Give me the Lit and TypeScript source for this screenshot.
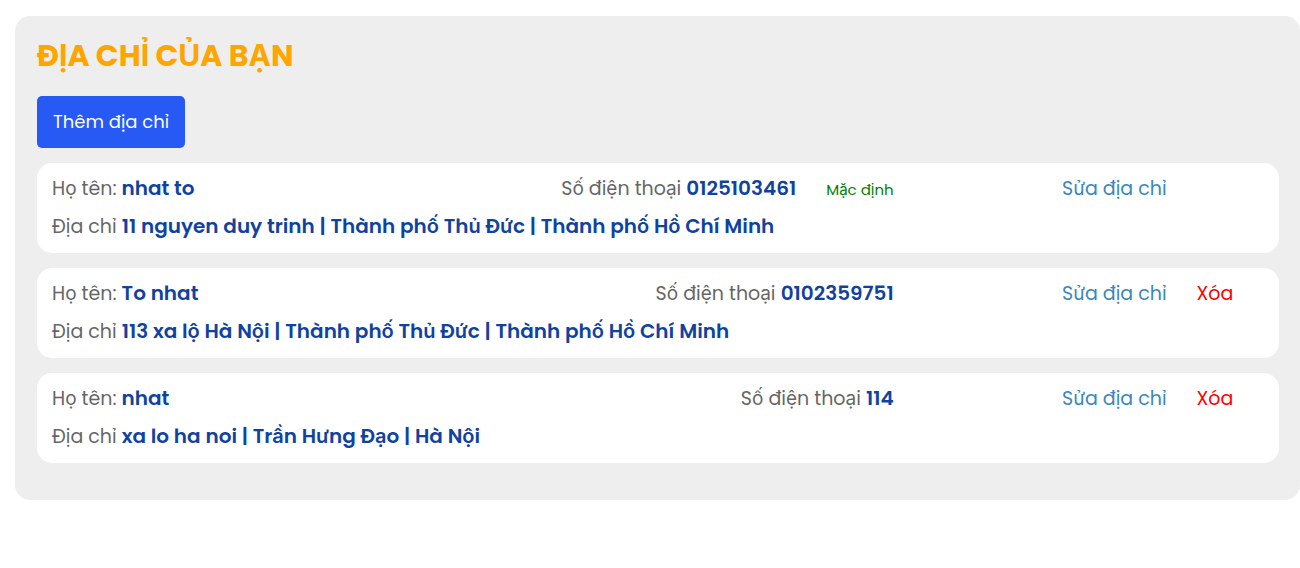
import { LitElement, html, css, nothing } from "lit";
import { customElement, property } from "lit/decorators.js";

interface Address {
  name: string;
  phone: string;
  parts: string[];
  isDefault?: boolean;
}

const ADDRESSES: Address[] = [
  {
    name: "nhat to",
    phone: "0125103461",
    parts: ["11 nguyen duy trinh", "Thành phố Thủ Đức", "Thành phố Hồ Chí Minh"],
    isDefault: true,
  },
  {
    name: "To nhat",
    phone: "0102359751",
    parts: ["113 xa lộ Hà Nội", "Thành phố Thủ Đức", "Thành phố Hồ Chí Minh"],
  },
  {
    name: "nhat",
    phone: "114",
    parts: ["xa lo ha noi", "Trần Hưng Đạo", "Hà Nội"],
  },
];

@customElement("address-card")
export class AddressCard extends LitElement {
  static styles = css`
    :host {
      display: block;
    }
    .card {
      display: grid;
      grid-template-columns: 25fr 5fr 6fr;
      row-gap: 8px;
      padding: 11px 15px;
      border-radius: 15px;
      background: #fff;
      color: #666;
      font-size: 19px;
      line-height: 30px;
    }
    .who {
      display: flex;
      justify-content: space-between;
    }
    .contact {
      display: flex;
      align-items: baseline;
      gap: 30px;
    }
    .value {
      color: #10439f;
      font-size: 20px;
      font-weight: 600;
      line-height: 20px;
    }
    .default {
      color: green;
      font-size: 15px;
      line-height: 20px;
    }
    .actions {
      grid-column: 3;
      display: flex;
      gap: 30px;
      white-space: nowrap;
    }
    .where {
      grid-column: 1 / -1;
    }
    .edit {
      color: #3887be;
      text-decoration: none;
    }
    .remove {
      padding: 0;
      border: 0;
      background: none;
      color: #f00;
      font: inherit;
      cursor: pointer;
    }
  `;

  @property({ attribute: false }) address!: Address;

  render() {
    const { name, phone, parts, isDefault } = this.address;
    return html`
      <article class="card">
        <div class="who">
          <span>Họ tên: <span class="value">${name}</span></span>
          <div class="contact">
            <span>Số điện thoại <span class="value">${phone}</span></span>
            ${isDefault ? html`<span class="default">Mặc định</span>` : nothing}
          </div>
        </div>
        <div class="actions">
          <a class="edit" href="#">Sửa địa chỉ</a>
          ${isDefault ? nothing : html`<button class="remove" type="button">Xóa</button>`}
        </div>
        <div class="where">Địa chỉ <span class="value">${parts.join(" | ")}</span></div>
      </article>
    `;
  }
}

@customElement("app-root")
export class AppRoot extends LitElement {
  static styles = css`
    :host {
      display: block;
      padding: 16px 0 16px 15px;
      font-family: Poppins, Inter, "Noto Sans", sans-serif;
    }
    .panel {
      padding: 17px 21px 37px 22px;
      border-radius: 15px;
      background: #eee;
    }
    .title {
      margin: 0 0 18px;
      color: orange;
      font-size: 30px;
      font-weight: 700;
      line-height: 45px;
    }
    .add {
      display: block;
      margin: 0 0 15px;
      padding: 12px 16px;
      border: 0;
      border-radius: 5px;
      background: #2759f5;
      color: #fff;
      font: inherit;
      font-size: 18px;
      line-height: 28px;
      cursor: pointer;
    }
    .list {
      display: grid;
      gap: 15px;
    }
  `;

  render() {
    return html`
      <main class="panel">
        <h1 class="title">ĐỊA CHỈ CỦA BẠN</h1>
        <button class="add" type="button">Thêm địa chỉ</button>
        <div class="list">
          ${ADDRESSES.map((a) => html`<address-card .address=${a}></address-card>`)}
        </div>
      </main>
    `;
  }
}
